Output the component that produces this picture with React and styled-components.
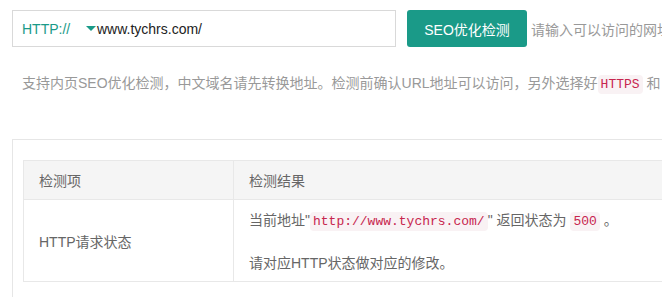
import React from "react";
import styled, { createGlobalStyle } from "styled-components";

const GlobalStyle = createGlobalStyle`
  body {
    margin: 0;
    background: #fff;
    font-family: "Liberation Sans", "Noto Sans CJK SC", sans-serif;
    overflow: hidden;
  }
`;

export default function App() {
  return (
    <>
      <GlobalStyle />
      <Page>
        <SearchBar>
          <UrlInput>
            <Scheme>HTTP://</Scheme>
            <Caret viewBox="0 0 10 5">
              <path d="M0 0 L10 0 L5 5 Z" fill="#1a9a88" />
            </Caret>
            <UrlText>www.tychrs.com/</UrlText>
          </UrlInput>
          <SubmitBtn>SEO优化检测</SubmitBtn>
          <Hint>请输入可以访问的网址</Hint>
        </SearchBar>
        <Tip>
          支持内页SEO优化检测，中文域名请先转换地址。检测前确认URL地址可以访问，另外选择好
          <Code>HTTPS</Code> 和 <Code>HTTP</Code>
        </Tip>
        <Panel>
          <Table>
            <thead>
              <tr>
                <Th $first>检测项</Th>
                <Th>检测结果</Th>
              </tr>
            </thead>
            <tbody>
              <tr>
                <Td $first>HTTP请求状态</Td>
                <Td>
                  <Para>
                    当前地址"<Code>http://www.tychrs.com/</Code>" 返回状态为 <Code>500</Code> 。
                  </Para>
                  <Para $last>请对应HTTP状态做对应的修改。</Para>
                </Td>
              </tr>
            </tbody>
          </Table>
        </Panel>
      </Page>
    </>
  );
}

const Page = styled.div`
  width: 662px;
  height: 297px;
  box-sizing: border-box;
  padding: 10px 0 0 12px;
  overflow: hidden;
`;

const SearchBar = styled.div`
  display: flex;
  align-items: center;
  white-space: nowrap;
`;

const UrlInput = styled.div`
  width: 384px;
  height: 37px;
  box-sizing: border-box;
  border: 1px solid #d9d9d9;
  display: flex;
  align-items: center;
  padding-left: 9px;
  font-size: 14px;
  flex-shrink: 0;
`;

const Scheme = styled.span`
  color: #1a9a88;
  width: 64px;
`;

const Caret = styled.svg`
  width: 10px;
  height: 5px;
  margin-right: 1px;
`;

const UrlText = styled.span`
  color: #222;
`;

const SubmitBtn = styled.button`
  margin-left: 11px;
  width: 120px;
  height: 37px;
  border: none;
  border-radius: 3px;
  background: #1a9a88;
  color: #fff;
  font-family: inherit;
  font-size: 14px;
  flex-shrink: 0;
`;

const Hint = styled.span`
  margin-left: 4px;
  color: #999;
  font-size: 14px;
`;

const Tip = styled.div`
  margin-top: 26px;
  padding-left: 10px;
  color: #999;
  font-size: 14px;
  line-height: 20px;
  white-space: nowrap;
`;

const Code = styled.code`
  font-family: "Liberation Mono", "DejaVu Sans Mono", monospace;
  font-size: 13px;
  color: #c7254e;
  background: #f9f2f4;
  padding: 2px 3px;
  border-radius: 4px;
`;

const Panel = styled.div`
  margin-top: 44px;
  border: 1px solid #e6e6e6;
  border-right: none;
  padding: 20px 0 60px 10px;
`;

const Table = styled.table`
  border-collapse: collapse;
  width: 700px;
  font-size: 14px;
  color: #666;
`;

const Th = styled.th`
  text-align: left;
  font-weight: normal;
  background: #f5f5f5;
  height: 39px;
  box-sizing: border-box;
  padding: 0 15px;
  border: 1px solid #e8e8e8;
  width: ${(p) => (p.$first ? "210px" : "auto")};
`;

const Td = styled.td`
  border: 1px solid #e8e8e8;
  padding: 9px 15px 7px;
  vertical-align: middle;
  line-height: 22px;
  white-space: nowrap;
`;

const Para = styled.p`
  margin: 0 0 19px;
  ${(p) => p.$last && "margin-bottom: 0;"}
`;
